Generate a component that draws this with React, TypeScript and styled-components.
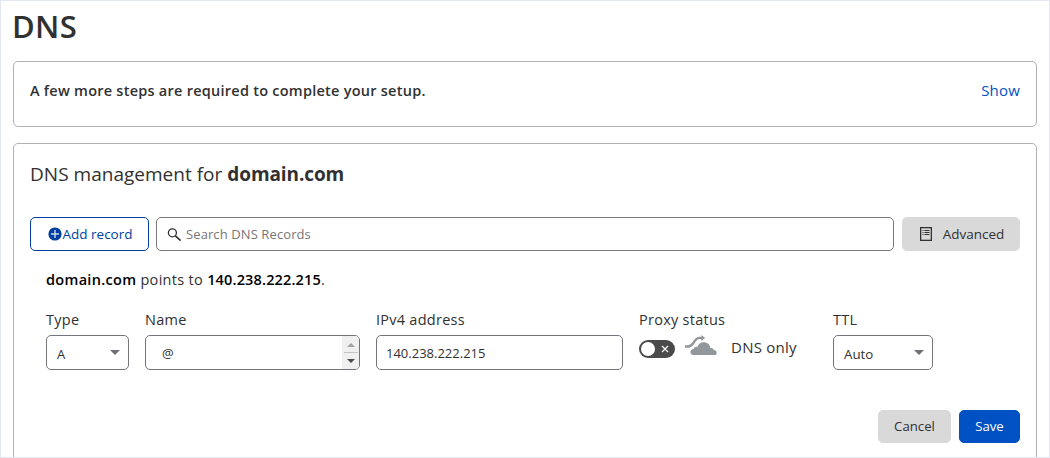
import React from 'react';
import styled, { createGlobalStyle } from 'styled-components';

const GlobalStyle = createGlobalStyle`
  *, *::before, *::after { box-sizing: border-box; }
  body { margin: 0; background: #fff; }
  button, input { font: inherit; letter-spacing: inherit; }
`;

const Page = styled.main`
  width: 1050px;
  height: 458px;
  padding: 0 12px;
  overflow: hidden;
  border: 1px solid #e3e7f1;
  background: #fff;
  color: #313131;
  font-family: 'Open Sans', 'Noto Sans', sans-serif;
  font-size: 14px;
`;

const Title = styled.h1`
  height: 60px;
  margin: 0;
  font-size: 31px;
  font-weight: 600;
  line-height: 51px;
  text-indent: -1px;
  letter-spacing: 0.4px;
`;

const Card = styled.section<{ $height: number }>`
  height: ${(p) => p.$height}px;
  padding: 0 16px;
  margin-bottom: 16px;
  border: 1px solid #b0b2b5;
  border-radius: 5px;
`;

const SetupRow = styled.div`
  display: flex;
  justify-content: space-between;
  line-height: 57px;
`;

const Txt = styled.span<{ $size?: number; $spacing?: number; $weight?: number; $color?: string }>`
  font-size: ${(p) => p.$size ?? 14}px;
  letter-spacing: ${(p) => p.$spacing ?? 0}px;
  font-weight: ${(p) => p.$weight ?? 400};
  color: ${(p) => p.$color ?? 'inherit'};
  white-space: pre;
`;

const Link = styled.a`
  color: #0051c3;
  font-size: 15px;
  letter-spacing: 0.2px;
  text-decoration: none;
`;

const Heading = styled.h2`
  height: 73px;
  margin: 0;
  font-size: 19px;
  font-weight: 400;
  line-height: 60px;
  white-space: nowrap;
`;

const Toolbar = styled.div`
  display: flex;
  height: 34px;
`;

const Button = styled.button<{
  $variant: 'outline' | 'muted' | 'primary';
  $width: number;
  $gap?: number;
}>`
  display: flex;
  align-items: center;
  justify-content: center;
  gap: ${(p) => p.$gap ?? 0}px;
  width: ${(p) => p.$width}px;
  padding: 0 0 1px;
  border: 1px solid
    ${(p) => ({ outline: '#003f9f', muted: '#d9d9d9', primary: '#0051c3' })[p.$variant]};
  border-radius: 5px;
  background: ${(p) => ({ outline: '#fff', muted: '#d9d9d9', primary: '#0051c3' })[p.$variant]};
  color: ${(p) => ({ outline: '#003f9f', muted: '#313131', primary: '#fff' })[p.$variant]};
  font-size: 13px;
`;

const ToolButton = styled(Button)`
  padding-left: 2px;
`;

const Search = styled.div`
  display: flex;
  flex: 1;
  align-items: center;
  gap: 4px;
  margin: 0 8px 0 7px;
  padding-left: 10px;
  border: 1px solid #797979;
  border-radius: 5px;
  color: #767676;
`;

const PointsTo = styled.p`
  height: 59px;
  margin: 0;
  padding-left: 16px;
  line-height: 57px;
  white-space: nowrap;
`;

const Fields = styled.div`
  display: grid;
  grid-template-columns: 83px 215px 247px 178px 100px;
  column-gap: 16px;
  padding-left: 16px;
`;

const Field = styled.div``;

const LabelText = styled.div`
  height: 25px;
  font-size: 14.5px;
  letter-spacing: 0.26px;
  line-height: 19px;
  white-space: nowrap;
`;

const Box = styled.div<{ $indent?: number; $end?: number; $drop?: number }>`
  display: flex;
  align-items: center;
  justify-content: space-between;
  height: 35px;
  padding: ${(p) => p.$drop ?? 0}px ${(p) => p.$end ?? 0}px 0 ${(p) => p.$indent ?? 10}px;
  overflow: hidden;
  border: 1px solid #72767a;
  border-radius: 5px;
`;

const Caret = styled.svg`
  display: block;
  margin-bottom: 4px;
`;

const Stepper = styled.div`
  width: 17px;
  height: 33px;
  padding: 0 2px;
  background: #f0f0f0;
`;

const Proxy = styled.div`
  display: flex;
  align-items: center;
  height: 24px;
  white-space: nowrap;
`;

const Toggle = styled.div`
  display: flex;
  align-items: center;
  justify-content: space-between;
  width: 36px;
  height: 18px;
  margin: 4px 10px 0 0;
  padding: 0 6px 0 2px;
  border-radius: 9px;
  background: #4a4a4a;
`;

const Knob = styled.span`
  width: 14px;
  height: 14px;
  border-radius: 50%;
  background: #fff;
`;

const Cloud = styled.svg`
  margin-bottom: 3px;
`;

const Status = styled.span`
  margin-left: 14px;
  font-size: 15px;
  letter-spacing: 0.25px;
`;

const Actions = styled.div`
  display: flex;
  justify-content: flex-end;
  gap: 8px;
  height: 33px;
  margin-top: 40px;
`;

const DropCaret = () => (
  <Caret width="10" height="5" viewBox="0 0 10 5">
    <path d="M0 0h10L5 5z" fill="#6d7175" />
  </Caret>
);

const PlusIcon = () => (
  <svg width="14" height="14" viewBox="0 0 14 14">
    <circle cx="7" cy="7" r="6.6" fill="#003f9f" />
    <path d="M7 3v8M3 7h8" stroke="#c9dbf5" strokeWidth="1.4" />
  </svg>
);

const SearchIcon = () => (
  <svg width="15" height="15" viewBox="0 0 15 15" fill="none" stroke="#313131">
    <circle cx="5.4" cy="5.8" r="4" strokeWidth="1.3" />
    <path d="M8.4 8.8L13.6 13.7" strokeWidth="1.6" />
  </svg>
);

const ListIcon = () => (
  <svg width="12" height="14" viewBox="0 0 12 14" fill="none" stroke="#313131">
    <rect x=".65" y=".65" width="10.7" height="12.7" strokeWidth="1.3" />
    <path d="M2.5 3.5h1M2.5 5.5h1M2.5 7.5h1M4.5 3.5h5M4.5 5.5h5M4.5 7.5h5" />
  </svg>
);

const CloudIcon = () => (
  <Cloud width="32" height="21" viewBox="0 0 32 21">
    <path
      d="M8.5 20C6.600 20 5.500 18.900 5.500 17.200c0-1.900 1.400-3.100 3.400-3.100.1-1.900 1.900-2.800 3.500-2C13.400 9 15.600 7.300 18.700 7.300c3.600 0 6.300 2.300 6.800 5.700 1.700-.4 3 .5 3.200 2 1.800.1 3 1.100 3 2.700 0 1.400-.8 2.300-2.100 2.300z"
      fill="#92979b"
    />
    <path
      d="M0 11.500h3.200c2.800 0 4-1.600 5.600-4.200C10.600 4.400 12 2.900 14.500 2.900H17.500"
      fill="none"
      stroke="#92979b"
      strokeWidth="2.4"
    />
    <path d="M16.300 0L20.200 3 16.300 6z" fill="#92979b" />
  </Cloud>
);

export default function App() {
  return (
    <>
      <GlobalStyle />
      <Page>
        <Title>DNS</Title>
        <Card $height={66}>
          <SetupRow>
            <Txt $weight={600} $size={14.5} $spacing={0.25}>
              A few more steps are required to complete your setup.
            </Txt>
            <Link href="#">Show</Link>
          </SetupRow>
        </Card>
        <Card $height={340}>
          <Heading>
            <Txt $size={19} $spacing={0.02}>{'DNS management for '}</Txt>
            <Txt $size={19} $weight={700} $spacing={-0.1}>domain.com</Txt>
          </Heading>
          <Toolbar>
            <ToolButton $variant="outline" $width={119}>
              <PlusIcon />
              <Txt $size={13.5}>Add record</Txt>
            </ToolButton>
            <Search>
              <SearchIcon />
              <Txt $size={13} $spacing={0.1}>Search DNS Records</Txt>
            </Search>
            <ToolButton $variant="muted" $width={118} $gap={11}>
              <ListIcon />
              <Txt $size={13.5}>Advanced</Txt>
            </ToolButton>
          </Toolbar>
          <PointsTo>
            <Txt $size={14.5} $spacing={0.31} $weight={600} $color="#000">domain.com</Txt>
            <Txt $size={14.5} $spacing={0.31}>{' points to '}</Txt>
            <Txt $size={14.5} $spacing={0.16} $weight={600} $color="#000">140.238.222.215</Txt>
            <Txt $size={14.5}>.</Txt>
          </PointsTo>
          <Fields>
            <Field>
              <LabelText>Type</LabelText>
              <Box $end={8} $drop={3}>
                <Txt $size={13}>A</Txt>
                <DropCaret />
              </Box>
            </Field>
            <Field>
              <LabelText>Name</LabelText>
              <Box $indent={16}>
                <Txt $size={13}>@</Txt>
                <Stepper>
                  <svg width="14" height="33" viewBox="0 0 14 33">
                    <path d="M3 11h8L7 7z" fill="#a3a3a3" />
                    <path d="M0 16.5h14" stroke="#c4c4c4" />
                    <path d="M3 23h8l-4 4z" fill="#4a4a4a" />
                  </svg>
                </Stepper>
              </Box>
            </Field>
            <Field>
              <LabelText>IPv4 address</LabelText>
              <Box $indent={9}>
                <Txt $size={13}>140.238.222.215</Txt>
              </Box>
            </Field>
            <Field>
              <LabelText>Proxy status</LabelText>
              <Proxy>
                <Toggle>
                  <Knob />
                  <svg width="8" height="8" viewBox="0 0 8 8">
                    <path d="M1 1l6 6M7 1L1 7" stroke="#fff" strokeWidth="1.2" />
                  </svg>
                </Toggle>
                <CloudIcon />
                <Status>DNS only</Status>
              </Proxy>
            </Field>
            <Field>
              <LabelText>TTL</LabelText>
              <Box $end={8} $drop={3}>
                <Txt $size={13.3}>Auto</Txt>
                <DropCaret />
              </Box>
            </Field>
          </Fields>
          <Actions>
            <Button $variant="muted" $width={73}>
              <Txt $size={13.2}>Cancel</Txt>
            </Button>
            <Button $variant="primary" $width={61}>
              <Txt $size={13.2}>Save</Txt>
            </Button>
          </Actions>
        </Card>
      </Page>
    </>
  );
}
